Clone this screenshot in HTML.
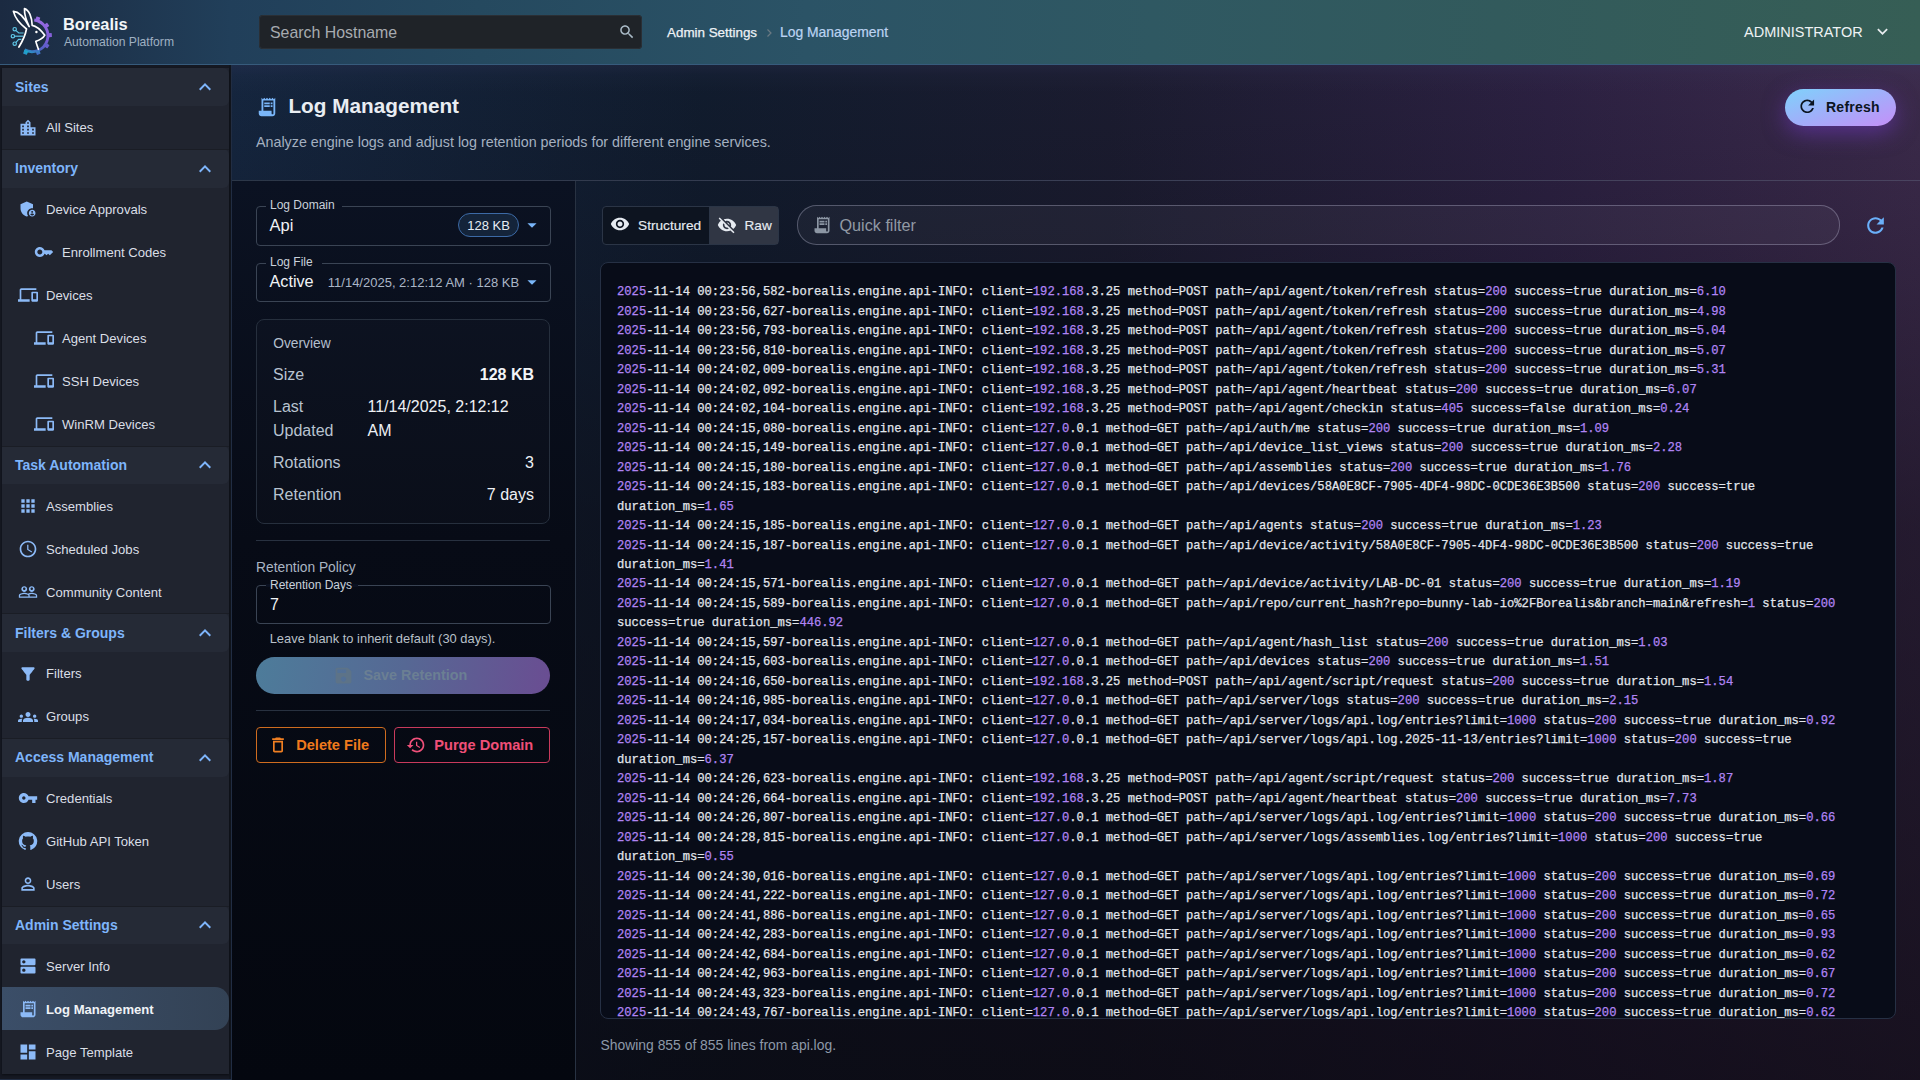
<!DOCTYPE html>
<html><head><meta charset="utf-8"><title>Log Management</title>
<style>
*{box-sizing:border-box;margin:0;padding:0}
html,body{width:1920px;height:1080px;overflow:hidden;background:#0d1017;font-family:"Liberation Sans",sans-serif}
.a{position:absolute}
.t{position:absolute;white-space:nowrap;line-height:1}
svg.a{display:block}
.lg{position:absolute;left:17px;-webkit-text-stroke:0.25px currentColor;white-space:pre;font-family:"Liberation Mono",monospace;font-size:12.17px;line-height:1;color:#e2e6ec}
.lg b{font-weight:400;color:#b084f4}
</style></head><body>
<div class="a" style="left:0px;top:0px;width:1920px;height:64px;background:linear-gradient(90deg,#1b2a41 0%,#213f5a 12%,#25495f 25%,#2b5366 42%,#2f5862 60%,#325a5c 78%,#365e55 100%)"></div>
<div class="a" style="left:0px;top:64px;width:1920px;height:1px;background:#375b7c"></div>
<svg class="a" style="left:5px;top:2px" width="60" height="60" viewBox="0 0 60 60">
<defs><linearGradient id="gg" gradientUnits="userSpaceOnUse" x1="34" y1="12" x2="16" y2="52"><stop offset="0" stop-color="#a070e4"/><stop offset="0.45" stop-color="#7a5ad6"/><stop offset="0.75" stop-color="#4a62c2"/><stop offset="1" stop-color="#10b8cc"/></linearGradient></defs>
<g fill="none" stroke="url(#gg)" stroke-width="2.9"><path d="M29.23 17.96 A 15.93 15.93 0 1 1 19.54 47.81"/></g>
<g fill="url(#gg)"><rect x="30.85" y="14.88" width="4" height="3.8" rx="0.5" transform="rotate(19.0 32.85 16.78)"/><rect x="39.62" y="21.43" width="4" height="3.8" rx="0.5" transform="rotate(54.5 41.62 23.33)"/><rect x="42.94" y="31.21" width="4" height="3.8" rx="0.5" transform="rotate(88.0 44.94 33.11)"/><rect x="39.88" y="41.87" width="4" height="3.8" rx="0.5" transform="rotate(124.0 41.88 43.77)"/><rect x="31.15" y="48.69" width="4" height="3.8" rx="0.5" transform="rotate(160.0 33.15 50.59)"/><rect x="18.59" y="48.58" width="4" height="3.8" rx="0.5" transform="rotate(201.0 20.59 50.48)"/></g>
<g fill="none" stroke="#ffffff" stroke-width="1.7" stroke-linejoin="round" stroke-linecap="round">
<path d="M13.9 45 C17 40 20 35 21.5 27 C15 22 10 16 8.4 9.4 C13 9.6 19 15 24.2 24.6 C21 18 19.3 11 19.5 6.6 C24 8 27 15 27.2 23.4 C31 24 35 27 39.8 33.2 C38 36.5 34 38.4 30.8 39.4 C31.5 42 32.5 44.5 33.4 47.3"/>
</g>
<circle cx="31.4" cy="30" r="1.2" fill="#fff"/>
<g fill="none" stroke="#5fc8e8" stroke-width="1.2">
<circle cx="9.7" cy="27.2" r="1.7"/><circle cx="7.9" cy="34.2" r="1.7"/><circle cx="9.7" cy="41.7" r="1.7"/>
<path d="M11 28.6 L13.8 31 L18.6 31"/><path d="M9.6 34.2 L18.2 34.2"/><path d="M11 40.3 L13.6 37.4 L16.4 37.4"/>
</g>
</svg>
<div class="t" style="left:63px;top:16.12px;font-size:16.4px;color:#f3f6f9;font-weight:700;">Borealis</div>
<div class="t" style="left:64px;top:36.32px;font-size:12.15px;color:#9fb0c2;font-weight:400;">Automation Platform</div>
<div class="a" style="left:259px;top:15px;width:383px;height:34px;background:#1f2328;border-radius:4px;box-shadow:inset 0 0 0 1px #2a2f35"></div>
<div class="t" style="left:270px;top:24.54px;font-size:15.9px;color:#a7abb0;font-weight:400;">Search Hostname</div>
<svg class="a" style="left:617.8px;top:22.8px;" width="17.8" height="17.8" viewBox="0 0 24 24" fill="#a9bac6"><path d="M15.5 14h-.79l-.28-.27C15.41 12.59 16 11.11 16 9.5 16 5.91 13.09 3 9.5 3S3 5.91 3 9.5 5.91 16 9.5 16c1.61 0 3.09-.59 4.23-1.57l.27.28v.79l5 4.99L20.49 19zm-6 0C7.01 14 5 11.99 5 9.5S7.01 5 9.5 5 14 7.01 14 9.5 11.99 14 9.5 14"/></svg>
<div class="t" style="left:667px;top:25.66px;font-size:13.4px;color:#eef2f6;font-weight:400;-webkit-text-stroke:0.25px #eef2f6">Admin Settings</div>
<svg class="a" style="left:764px;top:27px" width="10" height="12" viewBox="0 0 10 12"><path d="M3.5 2.5 L7 6 L3.5 9.5" fill="none" stroke="#6b7a83" stroke-width="1.2"/></svg>
<div class="t" style="left:780px;top:26.23px;font-size:13.9px;color:#bcd3f2;font-weight:400;-webkit-text-stroke:0.2px #bcd3f2">Log Management</div>
<div class="t" style="left:1744px;top:25.23px;font-size:14.5px;color:#eef2f4;font-weight:400;">ADMINISTRATOR</div>
<svg class="a" style="left:1871.75px;top:21.2px;" width="21" height="21" viewBox="0 0 24 24" fill="#e8ecef"><path d="M7.41 8.59 12 13.17l4.59-4.58L18 10l-6 6-6-6z"/></svg>
<div class="a" style="left:0px;top:65px;width:232px;height:1015px;background:#151822"></div>
<div class="a" style="left:229px;top:65px;width:2px;height:1015px;background:#11151d"></div>
<div class="a" style="left:231px;top:65px;width:1px;height:1015px;background:#212d43"></div>
<div class="a" style="left:0px;top:1079px;width:231px;height:1px;background:#212d43"></div>
<div class="a" style="left:2px;top:67.5px;width:227px;height:1006px;background:#20242f;box-shadow:0 1px 2px rgba(0,0,0,0.45)"></div>
<div class="a" style="left:2px;top:67.5px;width:227px;height:38.65px;background:#252a36;border-radius:0 6px 6px 0"></div>
<div class="t" style="left:15px;top:79.57px;font-size:14px;color:#7eb5fb;font-weight:700;">Sites</div>
<svg class="a" style="left:193px;top:74.92px;" width="24" height="24" viewBox="0 0 24 24" fill="#7eb5fb"><path d="m12 8-6 6 1.41 1.41L12 10.83l4.59 4.58L18 14z"/></svg>
<svg class="a" style="left:18px;top:117.65px;" width="20" height="20" viewBox="0 0 24 24" fill="#8cbaf7"><path d="M15 11V5l-3-3-3 3v2H3v14h18V11zm-8 8H5v-2h2zm0-4H5v-2h2zm0-4H5V9h2zm6 8h-2v-2h2zm0-4h-2v-2h2zm0-4h-2V9h2zm0-4h-2V5h2zm6 12h-2v-2h2zm0-4h-2v-2h2z"/></svg>
<div class="t" style="left:46px;top:121.31px;font-size:13.1px;color:#dadfe6;font-weight:400;">All Sites</div>
<div class="a" style="left:2px;top:149.15px;width:227px;height:38.65px;background:#252a36;border-radius:0 6px 6px 0"></div>
<div class="a" style="left:2px;top:149.15px;width:227px;height:1px;background:#1a1d25"></div>
<div class="t" style="left:15px;top:161.22px;font-size:14px;color:#7eb5fb;font-weight:700;">Inventory</div>
<svg class="a" style="left:193px;top:156.57px;" width="24" height="24" viewBox="0 0 24 24" fill="#7eb5fb"><path d="m12 8-6 6 1.41 1.41L12 10.83l4.59 4.58L18 14z"/></svg>
<svg class="a" style="left:18px;top:199.3px;" width="20" height="20" viewBox="0 0 24 24" fill="#8cbaf7"><path d="M17 11c.34 0 .67.04 1 .09V6.27L10.5 3 3 6.27v4.91c0 4.54 3.2 8.79 7.5 9.82.55-.13 1.08-.32 1.6-.55-.69-.98-1.1-2.17-1.1-3.45 0-3.31 2.69-6 6-6"/><path d="M17 13c-2.21 0-4 1.79-4 4s1.79 4 4 4 4-1.79 4-4-1.79-4-4-4m0 1.38c.62 0 1.12.51 1.12 1.12s-.51 1.12-1.12 1.12-1.12-.51-1.12-1.12.5-1.12 1.12-1.12m0 5.37c-.93 0-1.74-.46-2.24-1.17.05-.72 1.51-1.08 2.24-1.08s2.19.36 2.24 1.08c-.5.71-1.31 1.17-2.24 1.17"/></svg>
<div class="t" style="left:46px;top:202.96px;font-size:13.1px;color:#dadfe6;font-weight:400;">Device Approvals</div>
<svg class="a" style="left:34px;top:242.3px;" width="20" height="20" viewBox="0 0 24 24" fill="#8cbaf7"><path d="M21 10h-8.35C11.83 7.67 9.61 6 7 6c-3.31 0-6 2.69-6 6s2.69 6 6 6c2.61 0 4.83-1.67 5.65-4H13l2 2 2-2 2 2 4-4.04zM7 15c-1.65 0-3-1.35-3-3s1.35-3 3-3 3 1.35 3 3-1.35 3-3 3"/></svg>
<div class="t" style="left:62px;top:245.96px;font-size:13.1px;color:#dadfe6;font-weight:400;">Enrollment Codes</div>
<svg class="a" style="left:18px;top:285.3px;" width="20" height="20" viewBox="0 0 24 24" fill="#8cbaf7"><path d="M4 6h18V4H4c-1.1 0-2 .9-2 2v11H0v3h14v-3H4zm19 2h-6c-.55 0-1 .45-1 1v10c0 .55.45 1 1 1h6c.55 0 1-.45 1-1V9c0-.55-.45-1-1-1m-1 9h-4v-7h4z"/></svg>
<div class="t" style="left:46px;top:288.96px;font-size:13.1px;color:#dadfe6;font-weight:400;">Devices</div>
<svg class="a" style="left:34px;top:328.3px;" width="20" height="20" viewBox="0 0 24 24" fill="#8cbaf7"><path d="M4 6h18V4H4c-1.1 0-2 .9-2 2v11H0v3h14v-3H4zm19 2h-6c-.55 0-1 .45-1 1v10c0 .55.45 1 1 1h6c.55 0 1-.45 1-1V9c0-.55-.45-1-1-1m-1 9h-4v-7h4z"/></svg>
<div class="t" style="left:62px;top:331.96px;font-size:13.1px;color:#dadfe6;font-weight:400;">Agent Devices</div>
<svg class="a" style="left:34px;top:371.3px;" width="20" height="20" viewBox="0 0 24 24" fill="#8cbaf7"><path d="M4 6h18V4H4c-1.1 0-2 .9-2 2v11H0v3h14v-3H4zm19 2h-6c-.55 0-1 .45-1 1v10c0 .55.45 1 1 1h6c.55 0 1-.45 1-1V9c0-.55-.45-1-1-1m-1 9h-4v-7h4z"/></svg>
<div class="t" style="left:62px;top:374.96px;font-size:13.1px;color:#dadfe6;font-weight:400;">SSH Devices</div>
<svg class="a" style="left:34px;top:414.3px;" width="20" height="20" viewBox="0 0 24 24" fill="#8cbaf7"><path d="M4 6h18V4H4c-1.1 0-2 .9-2 2v11H0v3h14v-3H4zm19 2h-6c-.55 0-1 .45-1 1v10c0 .55.45 1 1 1h6c.55 0 1-.45 1-1V9c0-.55-.45-1-1-1m-1 9h-4v-7h4z"/></svg>
<div class="t" style="left:62px;top:417.96px;font-size:13.1px;color:#dadfe6;font-weight:400;">WinRM Devices</div>
<div class="a" style="left:2px;top:445.8px;width:227px;height:38.65px;background:#252a36;border-radius:0 6px 6px 0"></div>
<div class="a" style="left:2px;top:445.8px;width:227px;height:1px;background:#1a1d25"></div>
<div class="t" style="left:15px;top:457.88px;font-size:14px;color:#7eb5fb;font-weight:700;">Task Automation</div>
<svg class="a" style="left:193px;top:453.23px;" width="24" height="24" viewBox="0 0 24 24" fill="#7eb5fb"><path d="m12 8-6 6 1.41 1.41L12 10.83l4.59 4.58L18 14z"/></svg>
<svg class="a" style="left:18px;top:495.95px;" width="20" height="20" viewBox="0 0 24 24" fill="#8cbaf7"><path d="M4 8h4V4H4zm6 12h4v-4h-4zm-6 0h4v-4H4zm0-6h4v-4H4zm6 0h4v-4h-4zm6-10v4h4V4zm-6 4h4V4h-4zm6 6h4v-4h-4zm0 6h4v-4h-4z"/></svg>
<div class="t" style="left:46px;top:499.61px;font-size:13.1px;color:#dadfe6;font-weight:400;">Assemblies</div>
<svg class="a" style="left:18px;top:538.95px;" width="20" height="20" viewBox="0 0 24 24" fill="#8cbaf7"><path d="M11.99 2C6.47 2 2 6.48 2 12s4.47 10 9.99 10C17.52 22 22 17.52 22 12S17.52 2 11.99 2M12 20c-4.42 0-8-3.58-8-8s3.58-8 8-8 8 3.58 8 8-3.58 8-8 8"/><path d="M12.5 7H11v6l5.25 3.15.75-1.23-4.5-2.67z"/></svg>
<div class="t" style="left:46px;top:542.61px;font-size:13.1px;color:#dadfe6;font-weight:400;">Scheduled Jobs</div>
<svg class="a" style="left:18px;top:581.95px;" width="20" height="20" viewBox="0 0 24 24" fill="#8cbaf7"><path d="M16.5 13c-1.2 0-3.07.34-4.5 1-1.43-.67-3.3-1-4.5-1C5.33 13 1 14.08 1 16.25V19h22v-2.75c0-2.17-4.33-3.25-6.5-3.25m-4 4.5h-10v-1.25c0-.54 2.56-1.75 5-1.75s5 1.21 5 1.75zm9 0H14v-1.25c0-.46-.2-.86-.52-1.22.88-.3 1.96-.53 3.02-.53 2.44 0 5 1.21 5 1.75zM7.5 12c1.93 0 3.5-1.57 3.5-3.5S9.43 5 7.5 5 4 6.57 4 8.5 5.57 12 7.5 12m0-5.5c.83 0 1.5.67 1.5 1.5s-.67 1.5-1.5 1.5S6 8.83 6 8s.67-1.5 1.5-1.5m9 5.5c1.93 0 3.5-1.57 3.5-3.5S18.43 5 16.5 5 13 6.57 13 8.5s1.57 3.5 3.5 3.5m0-5.5c.83 0 1.5.67 1.5 1.5s-.67 1.5-1.5 1.5S15 8.83 15 8s.67-1.5 1.5-1.5"/></svg>
<div class="t" style="left:46px;top:585.61px;font-size:13.1px;color:#dadfe6;font-weight:400;">Community Content</div>
<div class="a" style="left:2px;top:613.45px;width:227px;height:38.65px;background:#252a36;border-radius:0 6px 6px 0"></div>
<div class="a" style="left:2px;top:613.45px;width:227px;height:1px;background:#1a1d25"></div>
<div class="t" style="left:15px;top:625.53px;font-size:14px;color:#7eb5fb;font-weight:700;">Filters &amp; Groups</div>
<svg class="a" style="left:193px;top:620.88px;" width="24" height="24" viewBox="0 0 24 24" fill="#7eb5fb"><path d="m12 8-6 6 1.41 1.41L12 10.83l4.59 4.58L18 14z"/></svg>
<svg class="a" style="left:18px;top:663.6px;" width="20" height="20" viewBox="0 0 24 24" fill="#8cbaf7"><path d="M4.25 5.61C6.27 8.2 10 13 10 13v6c0 .55.45 1 1 1h2c.55 0 1-.45 1-1v-6s3.72-4.8 5.74-7.39c.51-.66.04-1.61-.79-1.61H5.04c-.83 0-1.3.95-.79 1.61"/></svg>
<div class="t" style="left:46px;top:667.26px;font-size:13.1px;color:#dadfe6;font-weight:400;">Filters</div>
<svg class="a" style="left:18px;top:706.6px;" width="20" height="20" viewBox="0 0 24 24" fill="#8cbaf7"><path d="M12 12.75c1.63 0 3.07.39 4.24.9 1.08.48 1.76 1.56 1.76 2.73V18H6v-1.61c0-1.18.68-2.26 1.76-2.73 1.17-.52 2.61-.91 4.24-.91M4 13c1.1 0 2-.9 2-2s-.9-2-2-2-2 .9-2 2 .9 2 2 2m1.13 1.1c-.37-.06-.74-.1-1.13-.1-.99 0-1.93.21-2.78.58C.48 14.9 0 15.62 0 16.43V18h4.5v-1.61c0-.83.23-1.61.63-2.29M20 13c1.1 0 2-.9 2-2s-.9-2-2-2-2 .9-2 2 .9 2 2 2m4 3.43c0-.81-.48-1.53-1.22-1.85-.85-.37-1.79-.58-2.78-.58-.39 0-.76.04-1.13.1.4.68.63 1.46.63 2.29V18H24zM12 6c1.66 0 3 1.34 3 3s-1.34 3-3 3-3-1.34-3-3 1.34-3 3-3"/></svg>
<div class="t" style="left:46px;top:710.26px;font-size:13.1px;color:#dadfe6;font-weight:400;">Groups</div>
<div class="a" style="left:2px;top:738.1px;width:227px;height:38.65px;background:#252a36;border-radius:0 6px 6px 0"></div>
<div class="a" style="left:2px;top:738.1px;width:227px;height:1px;background:#1a1d25"></div>
<div class="t" style="left:15px;top:750.18px;font-size:14px;color:#7eb5fb;font-weight:700;">Access Management</div>
<svg class="a" style="left:193px;top:745.53px;" width="24" height="24" viewBox="0 0 24 24" fill="#7eb5fb"><path d="m12 8-6 6 1.41 1.41L12 10.83l4.59 4.58L18 14z"/></svg>
<svg class="a" style="left:18px;top:788.25px;" width="20" height="20" viewBox="0 0 24 24" fill="#8cbaf7"><path d="M12.65 10C11.83 7.67 9.61 6 7 6c-3.31 0-6 2.69-6 6s2.69 6 6 6c2.61 0 4.83-1.67 5.65-4H17v4h4v-4h2v-4zM7 14c-1.1 0-2-.9-2-2s.9-2 2-2 2 .9 2 2-.9 2-2 2"/></svg>
<div class="t" style="left:46px;top:791.91px;font-size:13.1px;color:#dadfe6;font-weight:400;">Credentials</div>
<svg class="a" style="left:18px;top:831.25px;" width="20" height="20" viewBox="0 0 24 24" fill="#8cbaf7"><path d="M12 1.27a11 11 0 0 0-3.48 21.46c.55.09.73-.28.73-.55v-1.84c-3.03.64-3.67-1.46-3.67-1.46-.55-1.29-1.28-1.65-1.28-1.65-.92-.65.1-.65.1-.65 1.1 0 1.73 1.1 1.73 1.1.92 1.65 2.57 1.2 3.21.92a2 2 0 0 1 .64-1.47c-2.47-.27-5.04-1.19-5.04-5.5 0-1.1.46-2.1 1.2-2.84a3.76 3.76 0 0 1 0-2.93s.91-.28 3.11 1.1c1.8-.49 3.7-.49 5.5 0 2.1-1.38 3.02-1.1 3.02-1.1a3.76 3.76 0 0 1 0 2.93c.83.74 1.2 1.74 1.2 2.94 0 4.21-2.57 5.13-5.04 5.4.45.37.82.92.82 2.02v3.03c0 .27.1.64.73.55A11 11 0 0 0 12 1.27"/></svg>
<div class="t" style="left:46px;top:834.91px;font-size:13.1px;color:#dadfe6;font-weight:400;">GitHub API Token</div>
<svg class="a" style="left:18px;top:874.25px;" width="20" height="20" viewBox="0 0 24 24" fill="#8cbaf7"><path d="M12 5.9c1.16 0 2.1.94 2.1 2.1s-.94 2.1-2.1 2.1S9.9 9.16 9.9 8s.94-2.1 2.1-2.1m0 9c2.97 0 6.1 1.46 6.1 2.1v1.1H5.9V17c0-.64 3.13-2.1 6.1-2.1M12 4C9.79 4 8 5.79 8 8s1.79 4 4 4 4-1.79 4-4-1.79-4-4-4m0 9c-2.67 0-8 1.34-8 4v3h16v-3c0-2.66-5.33-4-8-4"/></svg>
<div class="t" style="left:46px;top:877.91px;font-size:13.1px;color:#dadfe6;font-weight:400;">Users</div>
<div class="a" style="left:2px;top:905.75px;width:227px;height:38.65px;background:#252a36;border-radius:0 6px 6px 0"></div>
<div class="a" style="left:2px;top:905.75px;width:227px;height:1px;background:#1a1d25"></div>
<div class="t" style="left:15px;top:917.83px;font-size:14px;color:#7eb5fb;font-weight:700;">Admin Settings</div>
<svg class="a" style="left:193px;top:913.18px;" width="24" height="24" viewBox="0 0 24 24" fill="#7eb5fb"><path d="m12 8-6 6 1.41 1.41L12 10.83l4.59 4.58L18 14z"/></svg>
<svg class="a" style="left:18px;top:955.9px;" width="20" height="20" viewBox="0 0 24 24" fill="#8cbaf7"><path d="M20 13H4c-.55 0-1 .45-1 1v6c0 .55.45 1 1 1h16c.55 0 1-.45 1-1v-6c0-.55-.45-1-1-1M7 19c-1.1 0-2-.9-2-2s.9-2 2-2 2 .9 2 2-.9 2-2 2M20 3H4c-.55 0-1 .45-1 1v6c0 .55.45 1 1 1h16c.55 0 1-.45 1-1V4c0-.55-.45-1-1-1M7 9c-1.1 0-2-.9-2-2s.9-2 2-2 2 .9 2 2-.9 2-2 2"/></svg>
<div class="t" style="left:46px;top:959.56px;font-size:13.1px;color:#dadfe6;font-weight:400;">Server Info</div>
<div class="a" style="left:2px;top:987.4px;width:227px;height:43px;background:linear-gradient(90deg,#3b4e68,#334255);border-radius:0 14px 14px 0"></div>
<svg class="a" style="left:18px;top:998.9px;" width="20" height="20" viewBox="0 0 24 24" fill="#8cbaf7"><path d="M19.5 3.5 18 2l-1.5 1.5L15 2l-1.5 1.5L12 2l-1.5 1.5L9 2 7.5 3.5 6 2v14H3v3c0 1.66 1.34 3 3 3h12c1.66 0 3-1.34 3-3V2zM19 19c0 .55-.45 1-1 1s-1-.45-1-1v-3H8V5h11z"/><path d="M9 7h6v2H9zm7 0h2v2h-2zm-7 3h6v2H9zm7 0h2v2h-2z"/></svg>
<div class="t" style="left:46px;top:1002.56px;font-size:13.1px;color:#f0f3f7;font-weight:700;">Log Management</div>
<svg class="a" style="left:18px;top:1041.9px;" width="20" height="20" viewBox="0 0 24 24" fill="#8cbaf7"><path d="M3 13h8V3H3zm0 8h8v-6H3zm10 0h8V11h-8zm0-18v6h8V3z"/></svg>
<div class="t" style="left:46px;top:1045.56px;font-size:13.1px;color:#dadfe6;font-weight:400;">Page Template</div>
<div class="a" style="left:232px;top:65px;width:1688px;height:1015px;background:linear-gradient(180deg,rgba(60,60,100,0.22) 0px,rgba(60,60,100,0.08) 10px,rgba(60,60,100,0) 28px),linear-gradient(180deg,rgba(8,6,12,0) 0%,rgba(8,6,12,0.12) 14%,rgba(8,6,12,0.45) 45%,rgba(8,6,12,0.7) 100%),linear-gradient(90deg,#15263f 0%,#111c2e 28%,#1b1c30 52%,#2c2142 78%,#3c2b4c 100%)"></div>
<div class="a" style="left:232px;top:180px;width:1688px;height:1px;background:linear-gradient(90deg,#2c3748,#3a3f55 50%,#4a4460)"></div>
<div class="a" style="left:232px;top:181px;width:343px;height:899px;background:linear-gradient(180deg,#0b1222 0%,#070b16 40%,#04070f 100%)"></div>
<div class="a" style="left:575px;top:181px;width:1px;height:899px;background:#283242"></div>
<svg class="a" style="left:255.75px;top:96.2px;" width="22" height="22" viewBox="0 0 24 24" fill="#7ab6f9"><path d="M19.5 3.5 18 2l-1.5 1.5L15 2l-1.5 1.5L12 2l-1.5 1.5L9 2 7.5 3.5 6 2v14H3v3c0 1.66 1.34 3 3 3h12c1.66 0 3-1.34 3-3V2zM19 19c0 .55-.45 1-1 1s-1-.45-1-1v-3H8V5h11z"/><path d="M9 7h6v2H9zm7 0h2v2h-2zm-7 3h6v2H9zm7 0h2v2h-2z"/></svg>
<div class="t" style="left:288.4px;top:96.34px;font-size:20.75px;color:#e9edf2;font-weight:700;">Log Management</div>
<div class="t" style="left:256px;top:134.70px;font-size:14.3px;color:#a4b0c0;font-weight:400;">Analyze engine logs and adjust log retention periods for different engine services.</div>
<div class="a" style="left:1785px;top:88.75px;width:111px;height:37px;border-radius:19px;background:linear-gradient(160deg,#7fd2fb 0%,#9db2fa 45%,#c58ff8 100%);box-shadow:0 7px 22px rgba(120,60,210,0.5)"></div>
<svg class="a" style="left:1797px;top:96px;" width="20.5" height="20.5" viewBox="0 0 24 24" fill="#0b1521"><path d="M17.65 6.35C16.2 4.9 14.21 4 12 4c-4.42 0-7.99 3.58-7.99 8s3.57 8 7.99 8c3.73 0 6.84-2.55 7.73-6h-2.08c-.82 2.33-3.04 4-5.65 4-3.31 0-6-2.69-6-6s2.69-6 6-6c1.66 0 3.14.69 4.22 1.78L13 11h7V4z"/></svg>
<div class="t" style="left:1826px;top:100.05px;font-size:14px;color:#0b1521;font-weight:700;letter-spacing:0.25px">Refresh</div>
<div class="a" style="left:256px;top:205.5px;width:295px;height:40px;border:1px solid #3a4454;border-radius:4px"></div>
<div class="a" style="left:266px;top:204.5px;width:76px;height:3px;background:#0a1020"></div>
<div class="t" style="left:270px;top:198.84px;font-size:12px;color:#c9d1da;font-weight:400;">Log Domain</div>
<div class="t" style="left:269.5px;top:217.03px;font-size:16.5px;color:#f0f3f6;font-weight:400;">Api</div>
<div class="a" style="left:458px;top:213px;width:61px;height:24px;border:1px solid #3c6aa6;background:#14243a;border-radius:12px"></div>
<div class="t" style="left:467.3px;top:218.90px;font-size:13px;color:#e6ecf3;font-weight:400;">128 KB</div>
<svg class="a" style="left:521px;top:213.6px;" width="22" height="22" viewBox="0 0 24 24" fill="#7ab6f9"><path d="m7 10 5 5 5-5z"/></svg>
<div class="a" style="left:256px;top:262.5px;width:295px;height:39.5px;border:1px solid #3a4454;border-radius:4px"></div>
<div class="a" style="left:266px;top:261.5px;width:56px;height:3px;background:#0a1020"></div>
<div class="t" style="left:270px;top:255.84px;font-size:12px;color:#c9d1da;font-weight:400;">Log File</div>
<div class="t" style="left:269.5px;top:273.29px;font-size:16.2px;color:#f0f3f6;font-weight:400;">Active</div>
<div class="t" style="left:327.8px;top:276.00px;font-size:13px;color:#aab6c6;font-weight:400;">11/14/2025, 2:12:12 AM · 128 KB</div>
<svg class="a" style="left:521px;top:270.6px;" width="22" height="22" viewBox="0 0 24 24" fill="#7ab6f9"><path d="m7 10 5 5 5-5z"/></svg>
<div class="a" style="left:256px;top:318.5px;width:294px;height:205px;border:1px solid #262f3d;border-radius:8px;background:rgba(255,255,255,0.015)"></div>
<div class="t" style="left:273.2px;top:337.32px;font-size:13.8px;color:#b3bfcd;font-weight:400;">Overview</div>
<div class="t" style="left:273px;top:367.06px;font-size:16px;color:#b8c3d0;font-weight:400;">Size</div>
<div class="t" style="left:534px;top:367.06px;font-size:16px;color:#f2f4f7;font-weight:700;transform:translateX(-100%)">128 KB</div>
<div class="t" style="left:273px;top:398.66px;font-size:16px;color:#b8c3d0;font-weight:400;">Last</div>
<div class="t" style="left:273px;top:423.16px;font-size:16px;color:#b8c3d0;font-weight:400;">Updated</div>
<div class="t" style="left:367.5px;top:398.66px;font-size:16px;color:#eef1f5;font-weight:400;">11/14/2025, 2:12:12</div>
<div class="t" style="left:367.5px;top:423.16px;font-size:16px;color:#eef1f5;font-weight:400;">AM</div>
<div class="t" style="left:273px;top:454.66px;font-size:16px;color:#b8c3d0;font-weight:400;">Rotations</div>
<div class="t" style="left:534px;top:454.66px;font-size:16px;color:#eef1f5;font-weight:400;transform:translateX(-100%)">3</div>
<div class="t" style="left:273px;top:486.66px;font-size:16px;color:#b8c3d0;font-weight:400;">Retention</div>
<div class="t" style="left:534px;top:486.66px;font-size:16px;color:#eef1f5;font-weight:400;transform:translateX(-100%)">7 days</div>
<div class="a" style="left:256px;top:540px;width:294px;height:1px;background:#283140"></div>
<div class="t" style="left:256px;top:561.02px;font-size:13.8px;color:#aab5c3;font-weight:400;">Retention Policy</div>
<div class="a" style="left:256px;top:585.3px;width:295px;height:38.7px;border:1px solid #3a4454;border-radius:4px"></div>
<div class="a" style="left:266px;top:584.3px;width:92px;height:3px;background:#0a1020"></div>
<div class="t" style="left:270px;top:578.64px;font-size:12px;color:#c9d1da;font-weight:400;">Retention Days</div>
<div class="t" style="left:270px;top:597.26px;font-size:16px;color:#f0f3f6;font-weight:400;">7</div>
<div class="t" style="left:269.7px;top:632.98px;font-size:12.9px;color:#b9c0c8;font-weight:400;">Leave blank to inherit default (30 days).</div>
<div class="a" style="left:256px;top:657px;width:294px;height:37px;border-radius:18.5px;background:linear-gradient(100deg,#4d7c9a 0%,#566894 50%,#6a4d92 100%)"></div>
<svg class="a" style="left:333.4px;top:665.3px;" width="21" height="21" viewBox="0 0 24 24" fill="#5d7388"><path d="M17 3H5c-1.11 0-2 .9-2 2v14c0 1.1.89 2 2 2h14c1.1 0 2-.9 2-2V7zm-5 16c-1.66 0-3-1.34-3-3s1.34-3 3-3 3 1.34 3 3-1.34 3-3 3m3-10H5V5h10z"/></svg>
<div class="t" style="left:363.4px;top:667.91px;font-size:14.4px;color:#6b7f93;font-weight:700;">Save Retention</div>
<div class="a" style="left:256px;top:710px;width:294px;height:1px;background:#283140"></div>
<div class="a" style="left:256px;top:727.3px;width:130px;height:35.3px;border:1px solid #cf6c1f;border-radius:4px"></div>
<svg class="a" style="left:267.6px;top:735.2px;" width="20" height="20" viewBox="0 0 24 24" fill="#f07f22"><path d="M6 19c0 1.1.9 2 2 2h8c1.1 0 2-.9 2-2V7H6zM8 9h8v10H8zm7.5-5-1-1h-5l-1 1H5v2h14V4z"/></svg>
<div class="t" style="left:296.2px;top:738.34px;font-size:14.6px;color:#f07a1c;font-weight:700;">Delete File</div>
<div class="a" style="left:394px;top:727.3px;width:156px;height:35.3px;border:1px solid #c93a5c;border-radius:4px"></div>
<svg class="a" style="left:406.2px;top:735px;" width="20" height="20" viewBox="0 0 24 24" fill="#f0507a"><path d="M13 3c-4.97 0-9 4.03-9 9H1l3.89 3.89.07.14L9 12H6c0-3.87 3.13-7 7-7s7 3.13 7 7-3.13 7-7 7c-1.93 0-3.68-.79-4.94-2.06l-1.42 1.42C8.27 19.99 10.51 21 13 21c4.97 0 9-4.03 9-9s-4.03-9-9-9m-1 5v5l4.28 2.54.72-1.21-3.5-2.08V8z"/></svg>
<div class="t" style="left:434.3px;top:738.34px;font-size:14.6px;color:#f04f78;font-weight:700;">Purge Domain</div>
<div class="a" style="left:602px;top:206px;width:177px;height:38.5px;border:1px solid #2b3546;border-radius:4px;background:#0d1420;overflow:hidden"></div>
<div class="a" style="left:709px;top:207px;width:69px;height:36.5px;background:#30374300;background:#303644"></div>
<div class="a" style="left:709px;top:207px;width:1px;height:36.5px;background:#2b3546"></div>
<svg class="a" style="left:609.7px;top:214.25px;" width="20" height="20" viewBox="0 0 24 24" fill="#e6ebf1"><path d="M12 4.5C7 4.5 2.73 7.61 1 12c1.73 4.39 6 7.5 11 7.5s9.27-3.11 11-7.5c-1.73-4.39-6-7.5-11-7.5M12 17c-2.76 0-5-2.24-5-5s2.24-5 5-5 5 2.24 5 5-2.24 5-5 5m0-8c-1.66 0-3 1.34-3 3s1.34 3 3 3 3-1.34 3-3-1.34-3-3-3"/></svg>
<div class="t" style="left:638px;top:219.00px;font-size:13.7px;color:#e6ebf1;font-weight:400;-webkit-text-stroke:0.15px #e6ebf1">Structured</div>
<svg class="a" style="left:717.2px;top:215px;" width="20" height="20" viewBox="0 0 24 24" fill="#e6ebf1"><path d="M12 7c2.76 0 5 2.24 5 5 0 .65-.13 1.26-.36 1.83l2.92 2.92c1.51-1.26 2.7-2.89 3.43-4.75-1.73-4.39-6-7.5-11-7.5-1.4 0-2.74.25-3.98.7l2.16 2.16C10.74 7.13 11.35 7 12 7M2 4.27l2.28 2.28.46.46C3.08 8.3 1.78 10.02 1 12c1.73 4.39 6 7.5 11 7.5 1.55 0 3.03-.3 4.38-.84l.42.42L19.73 22 21 20.73 3.27 3zM7.53 9.8l1.55 1.55c-.05.21-.08.43-.08.65 0 1.66 1.34 3 3 3 .22 0 .44-.03.65-.08l1.55 1.55c-.67.33-1.41.53-2.2.53-2.76 0-5-2.24-5-5 0-.79.2-1.53.53-2.2m4.31-.78 3.15 3.15.02-.16c0-1.66-1.34-3-3-3z"/></svg>
<div class="t" style="left:744.5px;top:219.09px;font-size:13.6px;color:#e6ebf1;font-weight:400;-webkit-text-stroke:0.15px #e6ebf1">Raw</div>
<div class="a" style="left:797px;top:205px;width:1043px;height:39.5px;border:1px solid rgba(190,190,215,0.35);border-radius:19.5px;background:rgba(255,255,255,0.045)"></div>
<svg class="a" style="left:812px;top:215.3px;" width="20" height="20" viewBox="0 0 24 24" fill="#8c96a4"><path d="M19.5 3.5 18 2l-1.5 1.5L15 2l-1.5 1.5L12 2l-1.5 1.5L9 2 7.5 3.5 6 2v14H3v3c0 1.66 1.34 3 3 3h12c1.66 0 3-1.34 3-3V2zM19 19c0 .55-.45 1-1 1s-1-.45-1-1v-3H8V5h11z"/><path d="M9 7h6v2H9zm7 0h2v2h-2zm-7 3h6v2H9zm7 0h2v2h-2z"/></svg>
<div class="t" style="left:839.5px;top:217.49px;font-size:16.2px;color:#9199a5;font-weight:400;">Quick filter</div>
<svg class="a" style="left:1863.25px;top:212.5px;" width="25" height="25" viewBox="0 0 24 24" fill="#6ab0fa"><path d="M17.65 6.35C16.2 4.9 14.21 4 12 4c-4.42 0-7.99 3.58-7.99 8s3.57 8 7.99 8c3.73 0 6.84-2.55 7.73-6h-2.08c-.82 2.33-3.04 4-5.65 4-3.31 0-6-2.69-6-6s2.69-6 6-6c1.66 0 3.14.69 4.22 1.78L13 11h7V4z"/></svg>
<div class="a" style="left:600px;top:262px;width:1296px;height:757px;border:1px solid #263044;border-radius:8px;background:#080c18"></div>
<div class="t" style="left:600.5px;top:1038.93px;font-size:13.9px;color:#8d99a8;font-weight:400;">Showing 855 of 855 lines from api.log.</div>
<div class="a" style="left:600px;top:262px;width:1296px;height:757px;overflow:hidden;border-radius:8px">
<div class="lg" style="top:24.19px"><b>2025</b>-11-14 00:23:56,582-borealis.engine.api-INFO: client=<b>192.168</b>.3.25 method=POST path=/api/agent/token/refresh status=<b>200</b> success=true duration_ms=<b>6.10</b></div>
<div class="lg" style="top:43.68px"><b>2025</b>-11-14 00:23:56,627-borealis.engine.api-INFO: client=<b>192.168</b>.3.25 method=POST path=/api/agent/token/refresh status=<b>200</b> success=true duration_ms=<b>4.98</b></div>
<div class="lg" style="top:63.16px"><b>2025</b>-11-14 00:23:56,793-borealis.engine.api-INFO: client=<b>192.168</b>.3.25 method=POST path=/api/agent/token/refresh status=<b>200</b> success=true duration_ms=<b>5.04</b></div>
<div class="lg" style="top:82.65px"><b>2025</b>-11-14 00:23:56,810-borealis.engine.api-INFO: client=<b>192.168</b>.3.25 method=POST path=/api/agent/token/refresh status=<b>200</b> success=true duration_ms=<b>5.07</b></div>
<div class="lg" style="top:102.13px"><b>2025</b>-11-14 00:24:02,009-borealis.engine.api-INFO: client=<b>192.168</b>.3.25 method=POST path=/api/agent/token/refresh status=<b>200</b> success=true duration_ms=<b>5.31</b></div>
<div class="lg" style="top:121.62px"><b>2025</b>-11-14 00:24:02,092-borealis.engine.api-INFO: client=<b>192.168</b>.3.25 method=POST path=/api/agent/heartbeat status=<b>200</b> success=true duration_ms=<b>6.07</b></div>
<div class="lg" style="top:141.11px"><b>2025</b>-11-14 00:24:02,104-borealis.engine.api-INFO: client=<b>192.168</b>.3.25 method=POST path=/api/agent/checkin status=<b>405</b> success=false duration_ms=<b>0.24</b></div>
<div class="lg" style="top:160.59px"><b>2025</b>-11-14 00:24:15,080-borealis.engine.api-INFO: client=<b>127.0</b>.0.1 method=GET path=/api/auth/me status=<b>200</b> success=true duration_ms=<b>1.09</b></div>
<div class="lg" style="top:180.08px"><b>2025</b>-11-14 00:24:15,149-borealis.engine.api-INFO: client=<b>127.0</b>.0.1 method=GET path=/api/device_list_views status=<b>200</b> success=true duration_ms=<b>2.28</b></div>
<div class="lg" style="top:199.56px"><b>2025</b>-11-14 00:24:15,180-borealis.engine.api-INFO: client=<b>127.0</b>.0.1 method=GET path=/api/assemblies status=<b>200</b> success=true duration_ms=<b>1.76</b></div>
<div class="lg" style="top:219.05px"><b>2025</b>-11-14 00:24:15,183-borealis.engine.api-INFO: client=<b>127.0</b>.0.1 method=GET path=/api/devices/58A0E8CF-7905-4DF4-98DC-0CDE36E3B500 status=<b>200</b> success=true</div>
<div class="lg" style="top:238.54px">duration_ms=<b>1.65</b></div>
<div class="lg" style="top:258.02px"><b>2025</b>-11-14 00:24:15,185-borealis.engine.api-INFO: client=<b>127.0</b>.0.1 method=GET path=/api/agents status=<b>200</b> success=true duration_ms=<b>1.23</b></div>
<div class="lg" style="top:277.51px"><b>2025</b>-11-14 00:24:15,187-borealis.engine.api-INFO: client=<b>127.0</b>.0.1 method=GET path=/api/device/activity/58A0E8CF-7905-4DF4-98DC-0CDE36E3B500 status=<b>200</b> success=true</div>
<div class="lg" style="top:296.99px">duration_ms=<b>1.41</b></div>
<div class="lg" style="top:316.48px"><b>2025</b>-11-14 00:24:15,571-borealis.engine.api-INFO: client=<b>127.0</b>.0.1 method=GET path=/api/device/activity/LAB-DC-01 status=<b>200</b> success=true duration_ms=<b>1.19</b></div>
<div class="lg" style="top:335.97px"><b>2025</b>-11-14 00:24:15,589-borealis.engine.api-INFO: client=<b>127.0</b>.0.1 method=GET path=/api/repo/current_hash?repo=bunny-lab-io%2FBorealis&amp;branch=main&amp;refresh=<b>1</b> status=<b>200</b></div>
<div class="lg" style="top:355.45px">success=true duration_ms=<b>446.92</b></div>
<div class="lg" style="top:374.94px"><b>2025</b>-11-14 00:24:15,597-borealis.engine.api-INFO: client=<b>127.0</b>.0.1 method=GET path=/api/agent/hash_list status=<b>200</b> success=true duration_ms=<b>1.03</b></div>
<div class="lg" style="top:394.42px"><b>2025</b>-11-14 00:24:15,603-borealis.engine.api-INFO: client=<b>127.0</b>.0.1 method=GET path=/api/devices status=<b>200</b> success=true duration_ms=<b>1.51</b></div>
<div class="lg" style="top:413.91px"><b>2025</b>-11-14 00:24:16,650-borealis.engine.api-INFO: client=<b>192.168</b>.3.25 method=POST path=/api/agent/script/request status=<b>200</b> success=true duration_ms=<b>1.54</b></div>
<div class="lg" style="top:433.40px"><b>2025</b>-11-14 00:24:16,985-borealis.engine.api-INFO: client=<b>127.0</b>.0.1 method=GET path=/api/server/logs status=<b>200</b> success=true duration_ms=<b>2.15</b></div>
<div class="lg" style="top:452.88px"><b>2025</b>-11-14 00:24:17,034-borealis.engine.api-INFO: client=<b>127.0</b>.0.1 method=GET path=/api/server/logs/api.log/entries?limit=<b>1000</b> status=<b>200</b> success=true duration_ms=<b>0.92</b></div>
<div class="lg" style="top:472.37px"><b>2025</b>-11-14 00:24:25,157-borealis.engine.api-INFO: client=<b>127.0</b>.0.1 method=GET path=/api/server/logs/api.log.2025-11-13/entries?limit=<b>1000</b> status=<b>200</b> success=true</div>
<div class="lg" style="top:491.85px">duration_ms=<b>6.37</b></div>
<div class="lg" style="top:511.34px"><b>2025</b>-11-14 00:24:26,623-borealis.engine.api-INFO: client=<b>192.168</b>.3.25 method=POST path=/api/agent/script/request status=<b>200</b> success=true duration_ms=<b>1.87</b></div>
<div class="lg" style="top:530.83px"><b>2025</b>-11-14 00:24:26,664-borealis.engine.api-INFO: client=<b>192.168</b>.3.25 method=POST path=/api/agent/heartbeat status=<b>200</b> success=true duration_ms=<b>7.73</b></div>
<div class="lg" style="top:550.31px"><b>2025</b>-11-14 00:24:26,807-borealis.engine.api-INFO: client=<b>127.0</b>.0.1 method=GET path=/api/server/logs/api.log/entries?limit=<b>1000</b> status=<b>200</b> success=true duration_ms=<b>0.66</b></div>
<div class="lg" style="top:569.80px"><b>2025</b>-11-14 00:24:28,815-borealis.engine.api-INFO: client=<b>127.0</b>.0.1 method=GET path=/api/server/logs/assemblies.log/entries?limit=<b>1000</b> status=<b>200</b> success=true</div>
<div class="lg" style="top:589.28px">duration_ms=<b>0.55</b></div>
<div class="lg" style="top:608.77px"><b>2025</b>-11-14 00:24:30,016-borealis.engine.api-INFO: client=<b>127.0</b>.0.1 method=GET path=/api/server/logs/api.log/entries?limit=<b>1000</b> status=<b>200</b> success=true duration_ms=<b>0.69</b></div>
<div class="lg" style="top:628.26px"><b>2025</b>-11-14 00:24:41,222-borealis.engine.api-INFO: client=<b>127.0</b>.0.1 method=GET path=/api/server/logs/api.log/entries?limit=<b>1000</b> status=<b>200</b> success=true duration_ms=<b>0.72</b></div>
<div class="lg" style="top:647.74px"><b>2025</b>-11-14 00:24:41,886-borealis.engine.api-INFO: client=<b>127.0</b>.0.1 method=GET path=/api/server/logs/api.log/entries?limit=<b>1000</b> status=<b>200</b> success=true duration_ms=<b>0.65</b></div>
<div class="lg" style="top:667.23px"><b>2025</b>-11-14 00:24:42,283-borealis.engine.api-INFO: client=<b>127.0</b>.0.1 method=GET path=/api/server/logs/api.log/entries?limit=<b>1000</b> status=<b>200</b> success=true duration_ms=<b>0.93</b></div>
<div class="lg" style="top:686.71px"><b>2025</b>-11-14 00:24:42,684-borealis.engine.api-INFO: client=<b>127.0</b>.0.1 method=GET path=/api/server/logs/api.log/entries?limit=<b>1000</b> status=<b>200</b> success=true duration_ms=<b>0.62</b></div>
<div class="lg" style="top:706.20px"><b>2025</b>-11-14 00:24:42,963-borealis.engine.api-INFO: client=<b>127.0</b>.0.1 method=GET path=/api/server/logs/api.log/entries?limit=<b>1000</b> status=<b>200</b> success=true duration_ms=<b>0.67</b></div>
<div class="lg" style="top:725.69px"><b>2025</b>-11-14 00:24:43,323-borealis.engine.api-INFO: client=<b>127.0</b>.0.1 method=GET path=/api/server/logs/api.log/entries?limit=<b>1000</b> status=<b>200</b> success=true duration_ms=<b>0.72</b></div>
<div class="lg" style="top:745.17px"><b>2025</b>-11-14 00:24:43,767-borealis.engine.api-INFO: client=<b>127.0</b>.0.1 method=GET path=/api/server/logs/api.log/entries?limit=<b>1000</b> status=<b>200</b> success=true duration_ms=<b>0.62</b></div>
</div>
</body></html>
